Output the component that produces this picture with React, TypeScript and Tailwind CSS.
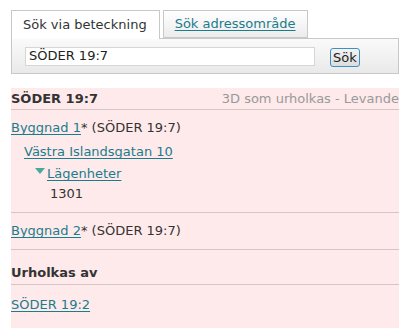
import React from "react"

const link = "text-[#1b7c8c] underline underline-offset-2"

export default function App() {
    return (
        <div className="min-h-[328px] bg-white font-['DejaVu_Sans',Verdana,sans-serif] text-[13px] text-[#333]">
            <div className="ml-[11px] w-[388px] overflow-hidden pt-[10px]">
                {/* Tabs */}
                <div className="flex gap-[3px]">
                    <div className="relative z-10 -mb-px flex h-[29px] items-center border border-b-0 border-[#c8c8c8] bg-white pl-[11px] pr-[12px]">
                        Sök via beteckning
                    </div>
                    <div className="flex h-[28px] items-center border border-[#c8c8c8] bg-gradient-to-b from-white to-[#ececec] px-[11px]">
                        <a href="#" className={link}>Sök adressområde</a>
                    </div>
                </div>

                {/* Search panel */}
                <div className="flex h-[36px] items-center border border-[#c8c8c8] bg-gradient-to-b from-[#fafafa] to-[#e9e9e9] pl-[13px]">
                    <input
                        defaultValue="SÖDER 19:7"
                        className="h-[19px] w-[290px] border border-[#d6d6d6] bg-white px-[3px] text-[13px] text-[#222] outline-none"
                    />
                    <button className="ml-[15px] mt-[2px] h-[19px] rounded-[3px] border border-[#3d8fc4] bg-gradient-to-b from-[#f4f4f4] to-[#dcdcdc] px-[2px] text-[13px] leading-none text-[#222]">
                        Sök
                    </button>
                </div>

                {/* Result */}
                <div className="mt-[14px] min-h-[240px] bg-[#feeaea]">
                    <div className="flex h-[22px] items-center justify-between border-b border-[#d5c5c5] whitespace-nowrap">
                        <span className="font-bold">SÖDER 19:7</span>
                        <span className="text-[#999]">3D som urholkas - Levande</span>
                    </div>

                    <div className="border-b border-[#d5c5c5] pt-[8px] pb-[8px]">
                        <div className="flex h-[20px] items-center">
                            <a href="#" className={link}>Byggnad 1</a>
                            <span>* (SÖDER 19:7)</span>
                        </div>
                        <div className="mt-[4px] flex h-[20px] items-center pl-[13px]">
                            <a href="#" className={link}>Västra Islandsgatan 10</a>
                        </div>
                        <div className="mt-[2px] flex h-[20px] items-center pl-[24px]">
                            <svg width="10" height="7" viewBox="0 0 10 7" className="mb-[6px] mr-[2px]">
                                <polygon points="0,0 10,0 5,6" fill="#4aa89a" />
                            </svg>
                            <a href="#" className={link}>Lägenheter</a>
                        </div>
                        <div className="flex h-[20px] items-center pl-[39px]">1301</div>
                    </div>

                    <div className="border-b border-[#d5c5c5] pt-[8px] pb-[8px]">
                        <div className="flex h-[20px] items-center">
                            <a href="#" className={link}>Byggnad 2</a>
                            <span>* (SÖDER 19:7)</span>
                        </div>
                    </div>

                    <div className="flex h-[35px] items-end border-b border-[#d5c5c5] pb-[1px] font-bold">
                        <span className="flex h-[20px] items-center">Urholkas av</span>
                    </div>

                    <div className="pt-[10px]">
                        <div className="flex h-[20px] items-center">
                            <a href="#" className={link}>SÖDER 19:2</a>
                        </div>
                    </div>
                </div>
            </div>
        </div>
    )
}
